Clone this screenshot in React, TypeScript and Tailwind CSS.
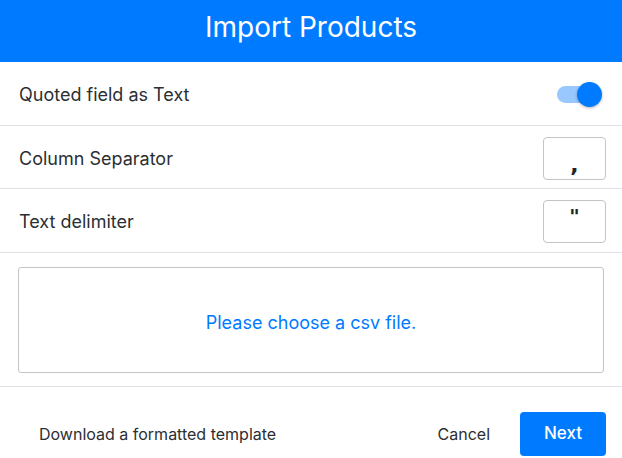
import * as React from 'react'

export default function App() {
  const [quoted, setQuoted] = React.useState(true)

  return (
    <div className="flex h-[458px] w-[622px] flex-col bg-white font-['Inter',sans-serif] text-[#212529]">
      <div className="flex h-[62px] items-center justify-center bg-[#007bff] pb-[8px]">
        <h1 className="text-[28px] font-normal text-white">Import Products</h1>
      </div>

      <div className="flex h-[64px] items-center justify-between border-b border-[#dee2e6] pl-[19px] pr-[20px] pt-[2px]">
        <span className="text-[18px] font-normal text-[#2b2f33]">Quoted field as Text</span>
        <button
          type="button"
          onClick={() => setQuoted((v) => !v)}
          className="relative h-[25px] w-[45px]"
          aria-pressed={quoted}
        >
          <span className="absolute left-0 top-[4px] h-[17px] w-[34px] rounded-full bg-[#99c8ff]" />
          <span className="absolute right-0 top-0 h-[25px] w-[25px] rounded-full bg-[#007bff] shadow-[0_1px_3px_rgba(0,0,0,0.3)]" />
        </button>
      </div>

      <div className="flex h-[63px] items-center justify-between border-b border-[#dee2e6] pl-[19px] pr-[16px] pt-[2px]">
        <span className="text-[18px] font-normal text-[#2b2f33]">Column Separator</span>
        <input
          defaultValue=","
          className="h-[43px] w-[63px] rounded-[4px] border border-[#c4c4c4] pt-[12px] text-center font-['DejaVu_Sans',sans-serif] text-[22px] font-bold text-[#212529] outline-none"
        />
      </div>

      <div className="flex h-[64px] items-center justify-between border-b border-[#dee2e6] pl-[19px] pr-[16px] pt-[2px]">
        <span className="text-[18px] font-normal text-[#2b2f33]">Text delimiter</span>
        <input
          defaultValue={'"'}
          className="h-[43px] w-[63px] rounded-[4px] border border-[#c4c4c4] pb-[12px] text-center font-['DejaVu_Sans',sans-serif] text-[20px] font-bold text-[#212529] outline-none"
        />
      </div>

      <div className="border-b border-[#dee2e6] px-[18px] pb-[13px] pt-[14px]">
        <div className="flex h-[106px] items-center justify-center rounded-[3px] border border-[#c4c4c4] pt-[4px]">
          <span className="text-[18px] font-normal text-[#007bff]">Please choose a csv file.</span>
        </div>
      </div>

      <div className="flex flex-1 items-end pb-[2px] pl-[39px] pr-[16px]">
        <div className="flex h-[44px] w-full items-center">
          <button type="button" className="text-[16px] font-normal text-[#2b2f33]">
            Download a formatted template
          </button>
          <button type="button" className="ml-auto mr-[30px] text-[16px] font-normal text-[#2b2f33]">
            Cancel
          </button>
          <button
            type="button"
            className="h-[44px] w-[86px] rounded-[4px] bg-[#007bff] text-[17px] font-medium text-white"
          >
            Next
          </button>
        </div>
      </div>
    </div>
  )
}
